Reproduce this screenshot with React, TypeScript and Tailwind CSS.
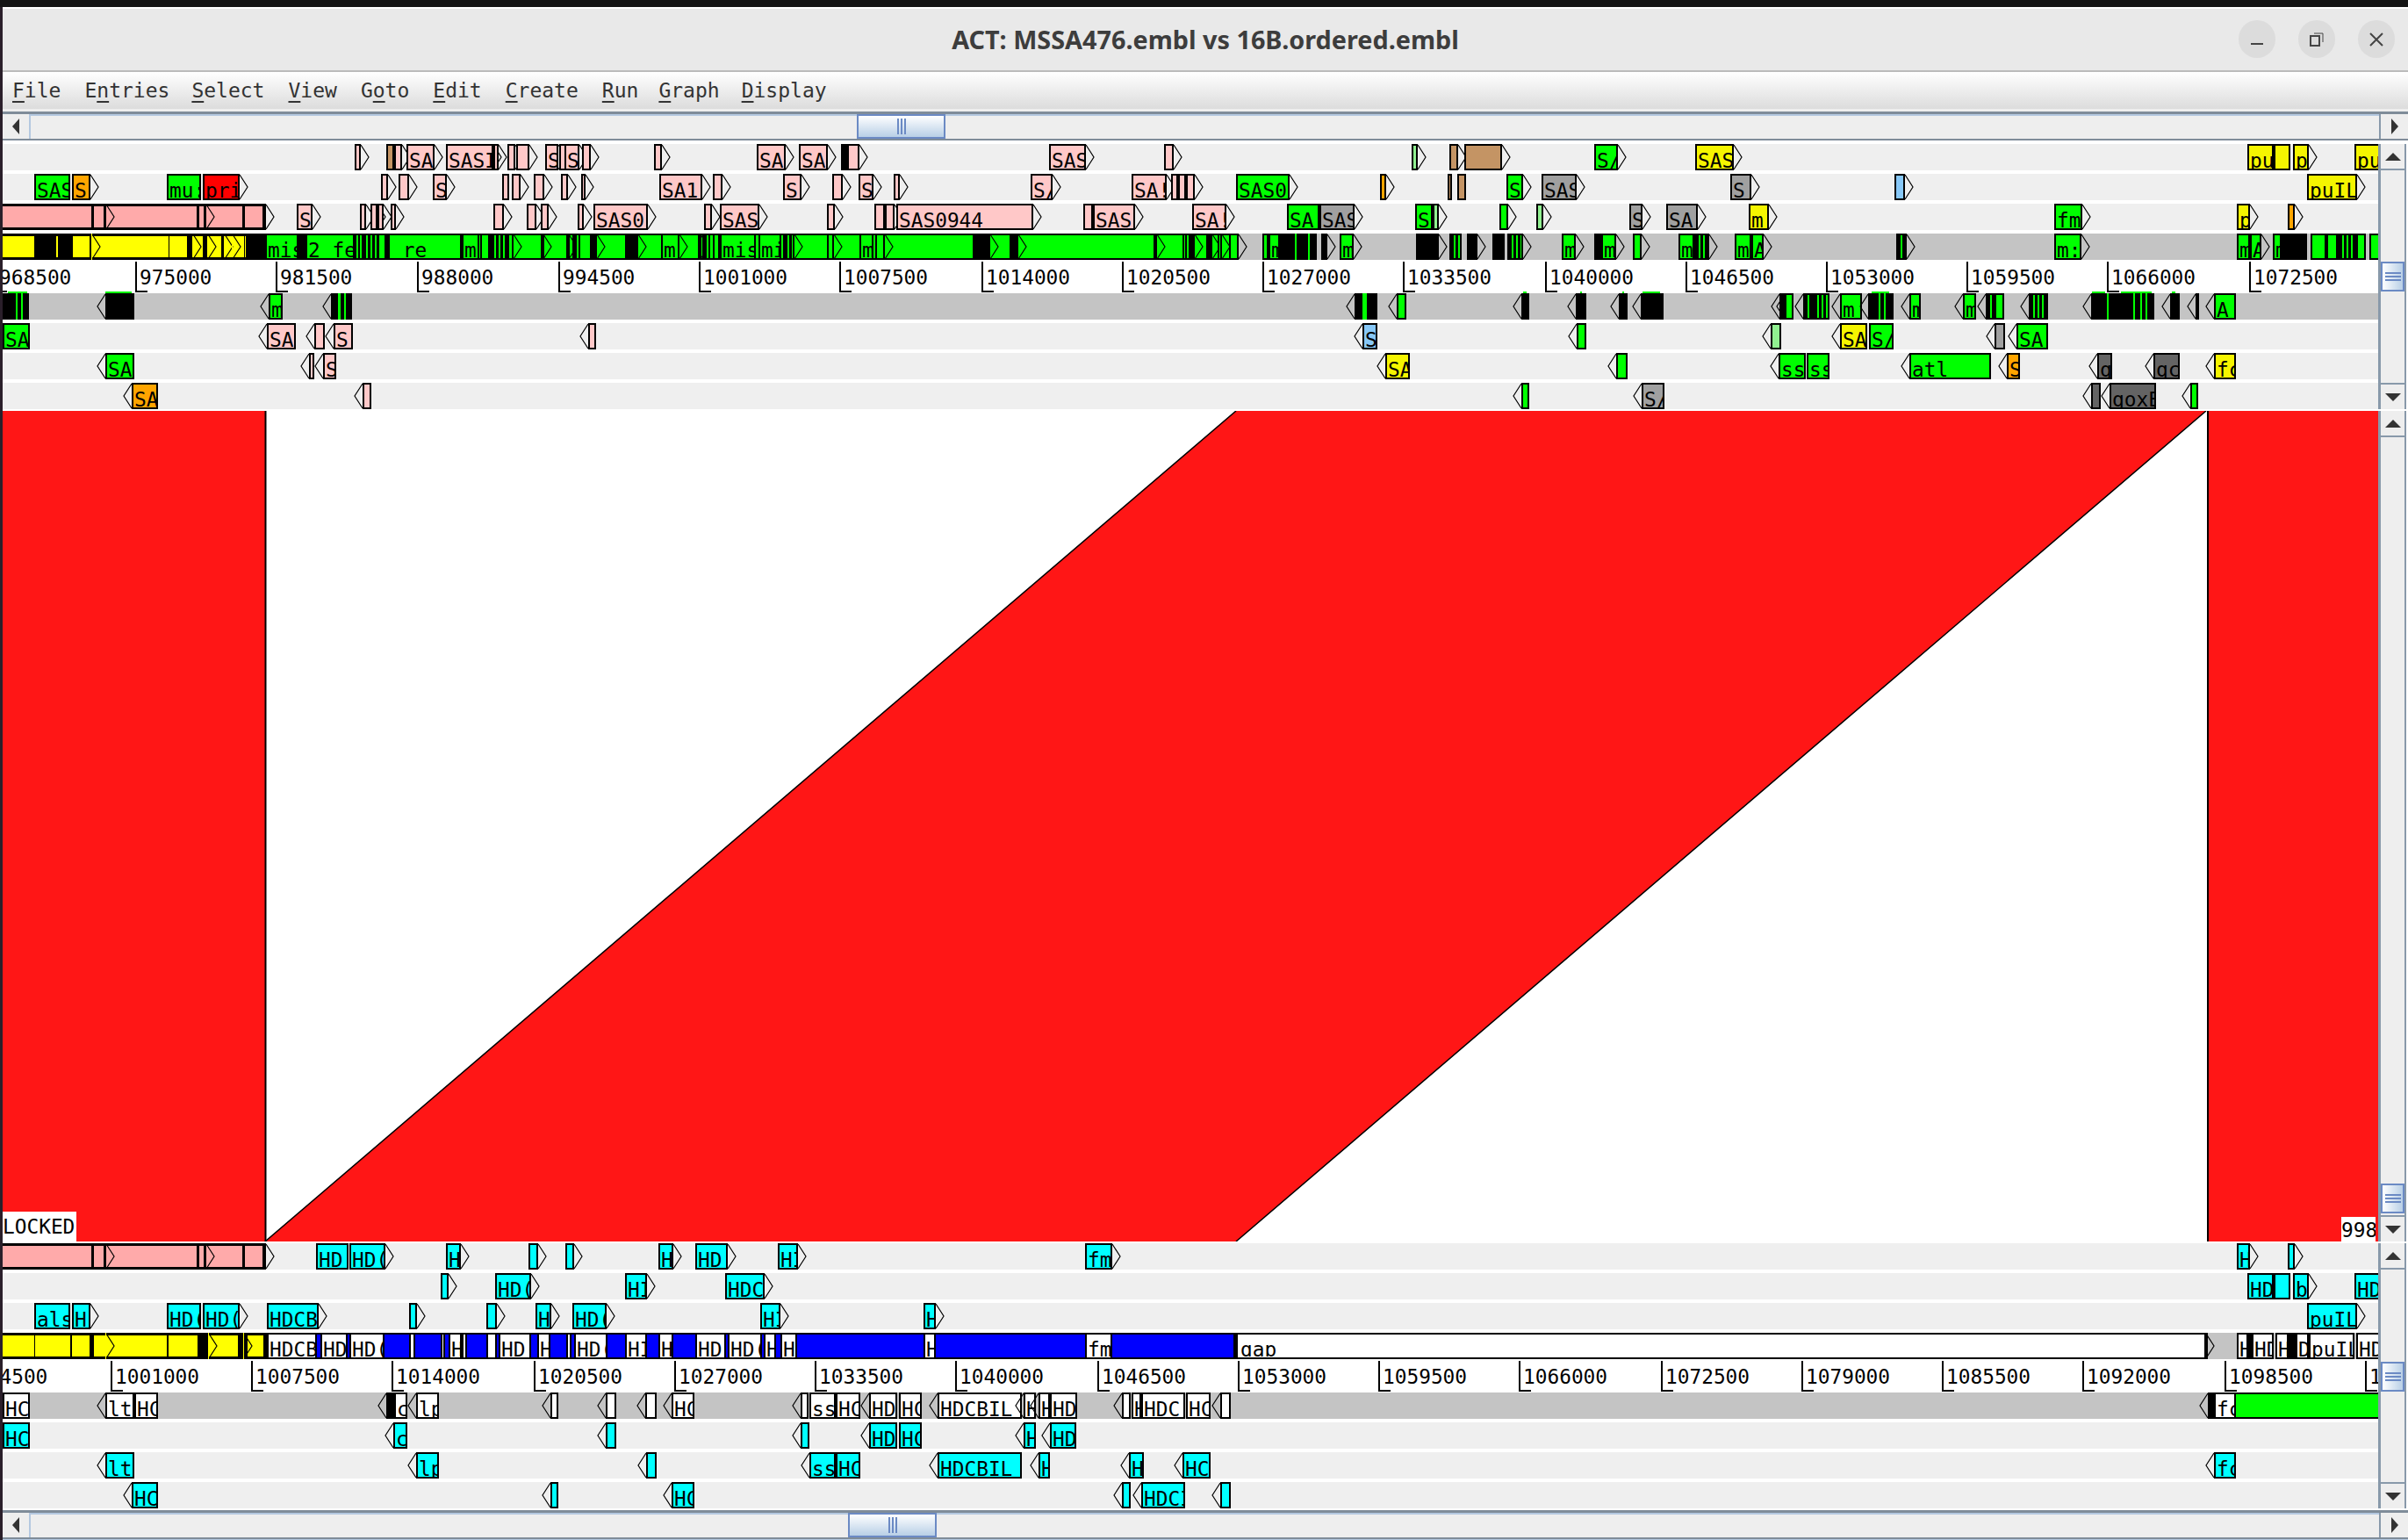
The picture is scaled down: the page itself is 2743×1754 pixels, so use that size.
import React from "react";

type Item = [number, number, string, string?, string?];

const COL: Record<string, string> = {
  p: "#ffc8c8", P: "#ffaaaa", g: "#00ff00", y: "#ffff00", Y: "#f5f500", o: "#ffa500", r: "#ff0000",
  b: "#c49464", G: "#a0a0a0", D: "#646464", c: "#00ffff", w: "#ffffff", l: "#90f090", B: "#87c8f8",
  k: "#000000", u: "#0000ff", C: "#c4c4c4",
  h: "repeating-linear-gradient(90deg,#000 0 3px,#00ff00 3px 5px)",
};

function Feature({ item, rev }: { item: Item; rev: boolean }) {
  const [x1, x2, c, label = "", o = ""] = item;
  const flat = o.includes("f");
  const inset = o.includes("i");
  const arrow = o.includes("a") || (!flat && !inset && !o.includes("n"));
  return (
    <>
      <div
        className={`absolute overflow-hidden box-border ${inset ? "top-[3px] bottom-[3px]" : "top-0 bottom-0"} ${flat || inset ? "" : "border-2 border-black"}`}
        style={{ left: x1 - 3, width: x2 - x1, background: COL[c] }}
      >
        {label ? (
          <span className={`absolute left-px ${inset ? "top-[3px]" : "top-[4px]"} leading-[26px] text-[22.8px] text-black whitespace-pre`}>{label}</span>
        ) : null}
      </div>
      {arrow ? (
        <svg className="absolute top-0" style={{ left: rev ? x1 - 13 : x2 - 3 }} width="10" height="30">
          <path d={rev ? "M10 1 L1 15 L10 29" : "M0 1 L9 15 L0 29"} stroke="#000" strokeWidth="1.2" fill="none" />
        </svg>
      ) : null}
    </>
  );
}

function Track({ items, rev = false, grey = false }: { items: Item[]; rev?: boolean; grey?: boolean }) {
  return (
    <div className={`relative h-[30px] overflow-hidden ${grey ? "bg-[#c4c4c4]" : "bg-[#efefef]"}`}>
      {items.map((it, i) => (
        <Feature key={i} item={it} rev={rev} />
      ))}
    </div>
  );
}

function Ruler({ ticks, specks = [] }: { ticks: [number, string][]; specks?: [number, number][] }) {
  return (
    <div className="relative h-[38px] overflow-hidden bg-white">
      {ticks.map(([x, t]) => (
        <div key={t} className="absolute top-[2px] bottom-px" style={{ left: x - 3 }}>
          <div className="absolute left-0 top-0 bottom-0 w-[2px] bg-black" />
          <div className="absolute left-0 bottom-0 h-[2px] w-[14px] bg-black" />
          <span className="absolute left-[5px] top-0 leading-[36px] text-[22.8px] text-black">{t}</span>
        </div>
      ))}
      {specks.map(([a, b]) => (
        <div key={a} className="absolute bottom-0 h-[2px] bg-[#00ff00]" style={{ left: a - 3, width: b - a }} />
      ))}
    </div>
  );
}

function Tri({ dir }: { dir: "l" | "r" | "u" | "d" }) {
  const d = { l: "M0 9 L8 0 L8 18 Z", r: "M0 0 L8 9 L0 18 Z", u: "M0 9 L9 0 L18 9 Z", d: "M0 0 L18 0 L9 9 Z" }[dir];
  const hor = dir === "l" || dir === "r";
  return (
    <svg width={hor ? 8 : 18} height={hor ? 18 : 9}>
      <path d={d} fill="#333333" />
    </svg>
  );
}

function HScroll({ before }: { before: number }) {
  return (
    <div className="flex h-[33px] border-t-[3px] border-b-[2px] border-[#7f8c99] bg-[#eeeeee] shrink-0">
      <div className="flex h-full w-[32px] items-center justify-center border-r-2 border-[#b4c8e0]">
        <Tri dir="l" />
      </div>
      <div className="h-full border-t-2 border-[#b4c8e0]" style={{ width: before }} />
      <div className="flex h-full w-[101px] items-center justify-center gap-[2px] border-2 border-[#6b8ac4] bg-gradient-to-b from-white to-[#b8cfe6]">
        <div className="h-[18px] w-[2px] bg-[#6b8ac4]" />
        <div className="h-[18px] w-[2px] bg-[#6b8ac4]" />
        <div className="h-[18px] w-[2px] bg-[#6b8ac4]" />
      </div>
      <div className="h-full flex-1 border-t-2 border-[#b4c8e0]" />
      <div className="flex h-full w-[33px] items-center justify-center border-l-2 border-[#8899aa]">
        <Tri dir="r" />
      </div>
    </div>
  );
}

function VScroll({ before }: { before: number }) {
  return (
    <div className="flex w-[32px] shrink-0 flex-col border-l-[3px] border-r-[2px] border-[#8899aa] bg-[#eeeeee]">
      <div className="flex h-[30px] shrink-0 items-center justify-center border-b-[2px] border-[#8899aa]">
        <Tri dir="u" />
      </div>
      <div className="shrink-0" style={{ height: before }} />
      <div className="flex h-[34px] shrink-0 flex-col items-center justify-center gap-[2px] border-2 border-[#6b8ac4] bg-gradient-to-r from-white to-[#b8cfe6]">
        <div className="h-[2px] w-[18px] bg-[#6b8ac4]" />
        <div className="h-[2px] w-[18px] bg-[#6b8ac4]" />
        <div className="h-[2px] w-[18px] bg-[#6b8ac4]" />
      </div>
      <div className="flex-1" />
      <div className="flex h-[30px] shrink-0 items-center justify-center border-t-[2px] border-[#8899aa]">
        <Tri dir="d" />
      </div>
    </div>
  );
}

const selPink: Item[] = [
  [0, 302, "k", "", "f"],
  [3, 104, "P", "", "i"],
  [107, 118, "P", "", "i"],
  [121, 224, "P", "", "i"],
  [227, 232, "P", "", "i"],
  [235, 276, "P", "", "i"],
  [279, 299, "P", "", "i"],
  [120, 121, "k", "", "fa"],
  [234, 235, "k", "", "fa"],
  [302, 303, "k", "", "fa"],
];

const t1: Item[] = [
  [404, 411, "p"], [440, 449, "b", "", "n"], [449, 458, "p"], [463, 495, "p", "SA"], [508, 562, "p", "SASI"],
  [562, 568, "p"], [578, 587, "p"], [588, 603, "p"], [621, 636, "p", "S"], [637, 645, "p"], [643, 660, "p", "S"], [663, 673, "p"],
  [745, 754, "p"], [862, 895, "p", "SA"], [910, 943, "p", "SA"], [958, 967, "k", "", "n"], [965, 979, "p"],
  [1195, 1237, "p", "SAS"], [1326, 1337, "p"],
  [1608, 1615, "l"], [1651, 1661, "b"], [1668, 1711, "b"], [1816, 1843, "g", "S/"], [1931, 1975, "Y", "SAS"],
  [2560, 2590, "Y", "pu", "n"], [2590, 2609, "Y", "", "n"], [2612, 2630, "Y", "p"], [2682, 2712, "Y", "pu", "n"],
];
const t2: Item[] = [
  [39, 80, "g", "SAS", "n"], [82, 103, "o", "S."], [190, 229, "g", "mu:", "n"], [231, 273, "r", "pri"],
  [434, 442, "p"], [454, 466, "p"], [493, 509, "p", "S"], [572, 580, "p", "", "n"], [583, 593, "p"], [608, 620, "p"], [639, 647, "p"], [662, 667, "p"],
  [751, 800, "p", "SA1"], [812, 823, "p"], [892, 913, "p", "S."], [948, 960, "p"], [978, 995, "p", "S"], [1018, 1025, "p"],
  [1174, 1199, "p", "S/"], [1289, 1329, "p", "SA!"], [1334, 1342, "p", "", "n"], [1342, 1351, "p", "", "n"], [1351, 1361, "p"],
  [1408, 1469, "g", "SAS0"], [1572, 1579, "o"], [1649, 1654, "b", "", "n"], [1660, 1670, "b", "", "n"],
  [1716, 1735, "g", "S"], [1756, 1796, "G", "SAS"], [1971, 1995, "G", "S,"],
  [2158, 2170, "B"], [2628, 2685, "Y", "puIL"],
];
const t3: Item[] = [
  ...selPink,
  [338, 356, "p", "S"], [410, 417, "p"], [422, 430, "p"], [430, 437, "p"], [445, 451, "p"], [562, 574, "p"], [600, 611, "p"], [616, 625, "p"], [658, 665, "p"],
  [676, 738, "p", "SAS0"], [802, 811, "p"], [820, 865, "p", "SAS"], [942, 951, "p"], [996, 1008, "p", "", "n"], [1008, 1019, "p"],
  [1021, 1177, "p", "SAS0944"], [1234, 1245, "p", "", "n"], [1245, 1293, "p", "SASI"], [1358, 1397, "p", "SA!"],
  [1466, 1503, "g", "SA!", "n"], [1503, 1543, "G", "SAS"], [1612, 1632, "g", "S", "n"], [1632, 1639, "l"], [1708, 1718, "g"], [1750, 1758, "l"],
  [1856, 1871, "G", "S"], [1898, 1934, "G", "SA!"], [1992, 2015, "Y", "m"], [2340, 2372, "g", "fm"], [2548, 2563, "Y", "p"], [2606, 2614, "o"],
];
const t4: Item[] = [
  [1405, 2712, "C", "", "f"],
  [0, 302, "k", "", "f"],
  [3, 39, "y", "", "i"], [64, 66, "y", "", "i"], [83, 102, "y", "", "ia"], [104, 192, "y", "", "i"], [193, 213, "y", "", "i"],
  [219, 231, "y", "", "i"], [236, 252, "y", "", "i"], [255, 278, "y", "", "i"], [279, 280, "y", "", "i"],
  [104, 105, "y", "", "fa"], [219, 220, "y", "", "ia"], [236, 237, "y", "", "ia"], [255, 256, "y", "", "ia"], [264, 265, "y", "", "ia"],
  [302, 1405, "g", "", "n"],
  [302, 340, "g", "mis", "n"], [340, 348, "k", "", "n"], [348, 404, "g", "2 fe", "n"], [404, 410, "g", "", "n"], [412, 432, "h", "", "n"],
  [438, 442, "g", "", "n"], [442, 526, "g", " re", "n"], [526, 546, "g", "m", "n"], [547, 558, "g"], [558, 578, "h", "", "n"], [578, 585, "g"],
  [616, 619, "g"], [645, 648, "g"], [652, 661, "h", "", "n"], [672, 680, "k"],
  [712, 720, "k", "", "n"], [720, 727, "h"], [753, 774, "g", "m:"], [795, 798, "g"], [800, 809, "h", "", "n"], [812, 820, "g"],
  [820, 861, "g", "mis", "n"], [864, 890, "g", "mi", "n"], [892, 905, "h"], [942, 950, "g"], [979, 995, "g", "m", "n"], [997, 1008, "g"],
  [1108, 1122, "k", "", "n"], [1122, 1128, "h"], [1150, 1160, "k"], [1314, 1318, "k"], [1347, 1352, "g", "", "n"], [1354, 1361, "h"], [1374, 1381, "h"], [1387, 1392, "g"],
  [1400, 1411, "g"], [1438, 1445, "g", "", "n"], [1445, 1458, "g", "m", "n"], [1458, 1500, "k", "", "n"], [1475, 1477, "g", "", "f"], [1490, 1492, "g", "", "f"],
  [1505, 1512, "h"], [1526, 1542, "g", "m"], [1613, 1632, "k", "", "n"], [1632, 1639, "h"], [1651, 1665, "h", "", "n"], [1671, 1683, "k"],
  [1700, 1714, "k", "", "n"], [1717, 1735, "h"], [1779, 1795, "g", "m"], [1816, 1824, "k", "", "n"], [1824, 1841, "g", "m"], [1860, 1870, "g"],
  [1912, 1930, "g", "m", "n"], [1930, 1947, "h"], [1976, 1995, "g", "m", "n"], [1995, 2009, "g", "A"],
  [2160, 2172, "h"], [2340, 2371, "g", "m:"], [2548, 2563, "g", "m", "n"], [2563, 2576, "g", "A"],
  [2589, 2599, "g", "m", "n"], [2599, 2628, "k", "", "n"], [2632, 2650, "g", "", "n"], [2650, 2663, "g", "", "n"], [2663, 2684, "h", "", "n"], [2684, 2695, "g", "", "n"], [2699, 2712, "g", "", "n"],
];
const t5: Item[] = [
  [0, 33, "k", "", "n"], [18, 20, "g", "", "f"], [24, 26, "g", "", "f"], [120, 153, "k"], [306, 322, "g", "m"], [377, 401, "k"], [385, 388, "g", "", "f"], [392, 394, "g", "", "f"],
  [1543, 1569, "k"], [1552, 1557, "g", "", "f"], [1591, 1602, "g"], [1733, 1742, "k"], [1795, 1807, "k"], [1844, 1854, "k"], [1869, 1895, "k"],
  [2027, 2033, "k"], [2033, 2043, "g"], [2054, 2065, "h"], [2065, 2084, "h", "", "n"], [2096, 2121, "g", "m"], [2128, 2136, "k"], [2136, 2157, "k", "", "n"], [2140, 2142, "g", "", "f"], [2146, 2148, "g", "", "f"],
  [2175, 2188, "g", "m"], [2236, 2251, "g", "m"], [2262, 2272, "h"], [2272, 2283, "g", "", "n"], [2311, 2333, "h"],
  [2382, 2414, "k"], [2400, 2402, "g", "", "f"], [2414, 2454, "k", "", "n"], [2430, 2432, "g", "", "f"], [2438, 2440, "g", "", "f"], [2444, 2446, "g", "", "f"],
  [2472, 2483, "k"], [2501, 2505, "k"], [2522, 2547, "g", "A", ""],
];
const t6: Item[] = [
  [3, 34, "g", "SA", "n"], [304, 337, "p", "SA"], [358, 370, "p"], [380, 402, "p", "S"], [670, 679, "p"],
  [1552, 1569, "B", "S"], [1796, 1807, "g"], [2017, 2029, "l"], [2096, 2127, "Y", "SA"], [2129, 2157, "g", "S/", "n"], [2272, 2284, "G"], [2297, 2333, "g", "SA"],
];
const t7: Item[] = [
  [120, 153, "g", "SA"], [352, 358, "p"], [368, 383, "p", "S"],
  [1578, 1606, "Y", "SA"], [1841, 1854, "g"], [2026, 2057, "g", "ss"], [2058, 2084, "g", "ss", "n"], [2175, 2268, "g", "atl"], [2286, 2301, "o", "S"],
  [2389, 2406, "D", "q"], [2453, 2483, "D", "qc"], [2522, 2547, "Y", "fc"],
];
const t8: Item[] = [
  [150, 180, "o", "SA"], [413, 423, "p"], [1733, 1742, "g"], [1870, 1896, "G", "S/"], [2382, 2393, "D"], [2403, 2456, "D", "qoxE"], [2495, 2504, "g"],
];

const b1: Item[] = [
  ...selPink,
  [360, 397, "c", "HD", "n"], [398, 439, "c", "HD("], [508, 525, "c", "H"], [602, 613, "c"], [644, 654, "c"],
  [750, 767, "c", "H"], [792, 829, "c", "HD"], [886, 909, "c", "HI"], [1236, 1267, "c", "fm"], [2548, 2563, "c", "H"], [2606, 2614, "c"],
];
const b2: Item[] = [
  [502, 511, "c"], [564, 605, "c", "HD("], [712, 737, "c", "HI"], [826, 871, "c", "HDC"],
  [2560, 2590, "c", "HD", "n"], [2590, 2609, "c", "", "n"], [2612, 2630, "c", "b"], [2682, 2712, "c", "HD", "n"],
];
const b3: Item[] = [
  [39, 80, "c", "als", "n"], [82, 103, "c", "H"], [190, 229, "c", "HD(", "n"], [231, 273, "c", "HD("], [304, 363, "c", "HDCB"],
  [466, 475, "c"], [554, 566, "c"], [610, 628, "c", "H"], [652, 691, "c", "HD("], [866, 889, "c", "HI"], [1052, 1066, "c", "H"], [2628, 2685, "c", "puIL"],
];
const b4: Item[] = [
  [0, 302, "k", "", "f"],
  [3, 39, "y", "", "i"], [40, 80, "y", "", "i"], [82, 102, "y", "", "ia"], [107, 120, "y", "", "ia"], [120, 190, "y", "", "i"], [192, 225, "y", "", "i"],
  [237, 271, "y", "", "i"], [282, 300, "y", "", "i"], [120, 121, "y", "", "fa"], [237, 238, "y", "", "fa"], [277, 278, "y", "", "fa"],
  [302, 1408, "u", "", "n"], [1408, 2515, "w", "", "n"], [2515, 2712, "C", "", "f"], [2511, 2513, "w"],
  [304, 361, "w", "HDCB", "n"], [365, 396, "w", "HD", "n"], [398, 438, "w", "HD(", "n"], [466, 473, "w", "", "n"], [502, 507, "w", "", "n"],
  [511, 526, "w", "H", "n"], [526, 532, "w", "", "n"], [554, 566, "w", "", "n"], [568, 605, "w", "HD(", "n"], [612, 627, "w", "H", "n"], [645, 651, "w", "", "n"],
  [654, 692, "w", "HD(", "n"], [712, 737, "w", "HI", "n"], [750, 767, "w", "H", "n"], [792, 827, "w", "HD", "n"], [829, 868, "w", "HD(", "n"],
  [870, 884, "w", "H", "n"], [889, 908, "w", "HI", "n"], [1052, 1066, "w", "H", "n"], [1236, 1267, "w", "fm", "n"], [1405, 1410, "k", "", "n"], [1412, 1475, "w", "gap", "i"],
  [2548, 2561, "w", "H", "n"], [2561, 2565, "k", "", "n"], [2565, 2590, "w", "HD", "n"], [2592, 2607, "w", "H", "n"], [2607, 2617, "k", "", "n"], [2615, 2630, "w", "D", "n"], [2630, 2682, "w", "puIL", "n"], [2684, 2712, "w", "HD", "n"],
];
const b5: Item[] = [
  [2515, 2712, "g", "", "n"],
  [3, 34, "w", "HC", "n"], [120, 153, "w", "lt"], [153, 180, "w", "HC", "n"], [440, 449, "k"], [449, 464, "w", "c", "n"], [474, 500, "w", "lp"], [627, 636, "w"],
  [690, 702, "w"], [735, 748, "w"], [765, 791, "w", "HC"], [912, 921, "w"], [922, 952, "w", "ss", "n"], [952, 980, "w", "HC", "n"], [990, 1022, "w", "HD"], [1024, 1050, "w", "HC", "n"],
  [1068, 1164, "w", "HDCBIL"], [1166, 1180, "w", "H"], [1183, 1196, "w", "H"], [1196, 1227, "w", "HD", "n"], [1278, 1288, "w"], [1289, 1300, "w", "H", "n"], [1300, 1350, "w", "HDC", "n"], [1351, 1379, "w", "HC", "n"], [1390, 1402, "w"],
  [2515, 2522, "k"], [2522, 2547, "w", "fc", "n"],
];
const b6: Item[] = [
  [3, 34, "c", "HC", "n"], [448, 464, "c", "c"], [690, 702, "c"], [912, 922, "c"], [990, 1022, "c", "HD"], [1024, 1050, "c", "HC", "n"], [1166, 1180, "c", "H"], [1196, 1226, "c", "HD"],
];
const b7: Item[] = [
  [120, 153, "c", "lt"], [474, 500, "c", "lp"], [736, 748, "c"], [922, 952, "c", "ss"], [952, 980, "c", "HC", "n"], [1068, 1164, "c", "HDCBIL"], [1183, 1196, "c", "H"], [1286, 1303, "c", "H"], [1347, 1379, "c", "HC"], [2522, 2547, "c", "fc"],
];
const b8: Item[] = [
  [150, 180, "c", "HC"], [627, 636, "c"], [765, 791, "c", "HC"], [1278, 1288, "c"], [1300, 1350, "c", "HDCI"], [1390, 1402, "c"],
];

const topTicks: [number, string][] = [
  [-6, "968500"], [154, "975000"], [314, "981500"], [475, "988000"], [636, "994500"], [796, "1001000"], [956, "1007500"], [1118, "1014000"], [1278, "1020500"],
  [1438, "1027000"], [1598, "1033500"], [1760, "1040000"], [1920, "1046500"], [2080, "1053000"], [2240, "1059500"], [2400, "1066000"], [2562, "1072500"],
];
const botTicks: [number, string][] = [
  [-33, "994500"], [126, "1001000"], [286, "1007500"], [446, "1014000"], [608, "1020500"], [768, "1027000"], [928, "1033500"], [1088, "1040000"], [1250, "1046500"],
  [1410, "1053000"], [1570, "1059500"], [1730, "1066000"], [1892, "1072500"], [2052, "1079000"], [2212, "1085500"], [2372, "1092000"], [2534, "1098500"], [2694, "1105000"],
];
const topSpecks: [number, number][] = [
  [9, 31], [120, 150], [1735, 1739], [1800, 1802], [1848, 1850], [1871, 1891], [2132, 2152], [2383, 2398], [2416, 2451], [2474, 2478],
];

const menus: [string, string, string, string][] = [
  ["", "F", "ile", ""],
  ["E", "n", "tries", ""],
  ["", "S", "elect", "-ml-[2px]"],
  ["", "V", "iew", ""],
  ["G", "o", "to", ""],
  ["", "E", "dit", ""],
  ["", "C", "reate", ""],
  ["", "R", "un", ""],
  ["", "G", "raph", "-ml-[4px]"],
  ["", "D", "isplay", "-ml-[2px]"],
];

export default function App() {
  const mono = "font-['DejaVu_Sans_Mono',monospace]";
  return (
    <div className={`flex h-[1754px] w-[2743px] flex-col overflow-hidden bg-white ${mono}`}>
      <div className="h-[8px] shrink-0 bg-[#141414]" />
      <div className="flex min-h-0 flex-1">
        <div className="w-[3px] shrink-0 bg-[#2a1f2a]" />
        <div className="flex min-w-0 flex-1 flex-col">
          {/* title bar */}
          <div className="relative flex h-[74px] shrink-0 items-center justify-center border-t-2 border-b-2 border-t-white border-b-[#bbbbbb] bg-[#e9e9e9]">
            <span className="font-['Noto_Sans',sans-serif] text-[28.8px] font-bold text-[#3d3d3d]">ACT: MSSA476.embl vs 16B.ordered.embl</span>
            <div className="absolute right-[15px] top-[13px] flex gap-[26px]">
              <div className="flex h-[43px] w-[42px] items-center justify-center rounded-full bg-[#dcdcdc]">
                <svg width="18" height="18"><path d="M2 14 H16" stroke="#444" strokeWidth="2" /></svg>
              </div>
              <div className="flex h-[43px] w-[42px] items-center justify-center rounded-full bg-[#dcdcdc]">
                <svg width="18" height="18" fill="none" stroke="#444" strokeWidth="2"><rect x="2" y="5" width="10" height="11" /><path d="M6 2 H16 V12" strokeWidth="1" /></svg>
              </div>
              <div className="flex h-[43px] w-[42px] items-center justify-center rounded-full bg-[#dcdcdc]">
                <svg width="18" height="18" stroke="#444" strokeWidth="2"><path d="M2 2 L16 16 M16 2 L2 16" /></svg>
              </div>
            </div>
          </div>
          {/* menu */}
          <div className="flex h-[42px] shrink-0 items-center gap-[27px] bg-gradient-to-b from-white to-[#dcdcdc] pl-[11px] text-[23px] text-[#333333]">
            {menus.map(([a, u, b, m]) => (
              <span key={a + u + b} className={`whitespace-pre ${m}`}>
                {a}
                <span className="underline decoration-2 underline-offset-[4px]">{u}</span>
                {b}
              </span>
            ))}
          </div>
          <div className="h-[3px] shrink-0 bg-[#eeeeee]" />
          <HScroll before={941} />
          <div className="h-[4px] shrink-0" />

          {/* top tracks */}
          <div className="flex h-[302px] shrink-0">
            <div className="flex w-[2706px] shrink-0 flex-col">
              <div className="flex flex-col gap-[4px]">
                <Track items={t1} />
                <Track items={t2} />
                <Track items={t3} />
                <Track items={t4} />
              </div>
              <Ruler ticks={topTicks} specks={topSpecks} />
              <div className="flex flex-col gap-[4px]">
                <Track items={t5} rev grey />
                <Track items={t6} rev />
                <Track items={t7} rev />
                <Track items={t8} rev />
              </div>
            </div>
            <VScroll before={104} />
          </div>
          <div className="h-[2px] shrink-0" />

          {/* comparison */}
          <div className="flex h-[946px] shrink-0">
            <div className="relative w-[2706px] shrink-0 overflow-hidden bg-white">
              <svg width="2706" height="946" className="block">
                <polygon points="0,0 299,0 299,946 0,946" fill="#ff1616" />
                <polygon points="299,946 1405,0 2510,0 1405,946" fill="#ff1616" />
                <polygon points="2512,0 2706,0 2706,946 2512,946" fill="#ff1616" />
                <path d="M299 946 L1405 0 M2510 0 L1405 946" stroke="#000" strokeWidth="1.5" fill="none" />
                <path d="M299.5 0 V946 M2512 0 V946" stroke="#000" strokeWidth="2" fill="none" />
              </svg>
              <div className="absolute bottom-0 left-0 h-[34px] w-[84px] overflow-hidden bg-white text-[22.8px] leading-[34px] text-black">LOCKED</div>
              <div className="absolute bottom-0 right-[3px] h-[28px] w-[39px] overflow-hidden bg-white text-[22.8px] leading-[30px] text-black">998</div>
            </div>
            <VScroll before={850} />
          </div>
          <div className="h-[2px] shrink-0" />

          {/* bottom tracks */}
          <div className="flex h-[302px] shrink-0">
            <div className="flex w-[2706px] shrink-0 flex-col">
              <div className="flex flex-col gap-[4px]">
                <Track items={b1} />
                <Track items={b2} />
                <Track items={b3} />
                <Track items={b4} />
              </div>
              <Ruler ticks={botTicks} />
              <div className="flex flex-col gap-[4px]">
                <Track items={b5} rev grey />
                <Track items={b6} rev />
                <Track items={b7} rev />
                <Track items={b8} rev />
              </div>
            </div>
            <VScroll before={105} />
          </div>
          <div className="h-[2px] shrink-0" />
          <HScroll before={931} />
          <div className="flex-1 bg-[#b4c8e0]" />
        </div>
      </div>
    </div>
  );
}
